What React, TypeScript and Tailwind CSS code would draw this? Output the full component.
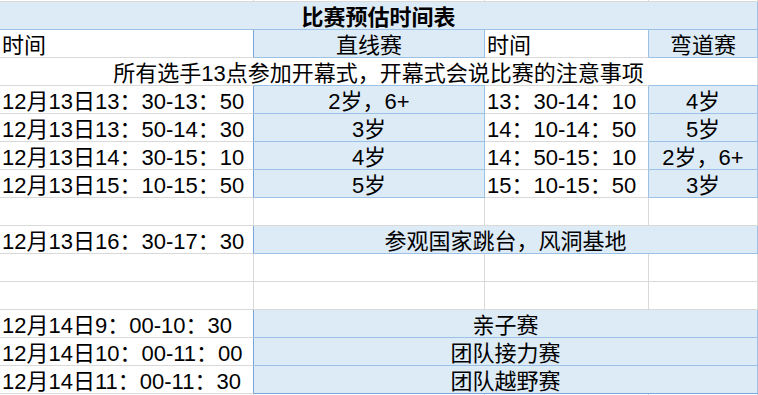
import React from "react";

const times1 = [
  ["12月13日13：30-13：50", "2岁，6+", "13：30-14：10", "4岁"],
  ["12月13日13：50-14：30", "3岁", "14：10-14：50", "5岁"],
  ["12月13日14：30-15：10", "4岁", "14：50-15：10", "2岁，6+"],
  ["12月13日15：10-15：50", "5岁", "15：10-15：50", "3岁"],
];

const day2 = [
  ["12月14日9：00-10：30", "亲子赛"],
  ["12月14日10：00-11：00", "团队接力赛"],
  ["12月14日11：00-11：30", "团队越野赛"],
];

function EmptyRow() {
  return (
    <div className="flex h-[28px]">
      <div className="w-[254px] border-b border-r border-b-[#d9d9d9] border-r-[#d9d9d9]" />
      <div className="w-[231px] border-b border-r border-b-[#d9d9d9] border-r-[#d9d9d9]" />
      <div className="w-[164px] border-b border-r border-b-[#d9d9d9] border-r-[#d9d9d9]" />
      <div className="w-[109px] border-b border-r border-b-[#d9d9d9] border-r-[#d9d9d9]" />
    </div>
  );
}

function MergedRow({ time, label, last }: { time: string; label: string; last?: boolean }) {
  return (
    <div className="flex h-[28px]">
      <div className="flex w-[254px] items-end whitespace-nowrap border-b border-r border-b-[#d9d9d9] border-r-[#7aa6da] pl-[2px]">
        {time}
      </div>
      <div
        className={
          last
            ? "flex w-[504px] items-end justify-center whitespace-nowrap border-b border-r border-b-[#7aa6da] border-r-[#9bc2e6] bg-[#ddebf7]"
            : "flex w-[504px] items-end justify-center whitespace-nowrap border-b border-r border-b-[#9bc2e6] border-r-[#9bc2e6] bg-[#ddebf7]"
        }
      >
        {label}
      </div>
    </div>
  );
}

export default function App() {
  return (
    <div className="h-[395px] w-[758px] overflow-hidden bg-white font-['Liberation_Sans','Noto_Sans_CJK_SC',sans-serif] text-[22px] leading-[22px] text-black">
      {/* sliver of row above */}
      <div className="flex h-[2px] border-b border-b-[#d9d9d9]">
        <div className="w-[254px] border-r border-r-[#d9d9d9]" />
        <div className="w-[231px] border-r border-r-[#d9d9d9]" />
        <div className="w-[164px] border-r border-r-[#d9d9d9]" />
        <div className="w-[109px] border-r border-r-[#d9d9d9]" />
      </div>

      {/* title */}
      <div className="flex h-[28px] items-end justify-center border-b border-r border-b-[#9bc2e6] border-r-[#9bc2e6] bg-[#ddebf7] font-bold">
        比赛预估时间表
      </div>

      {/* header */}
      <div className="flex h-[28px]">
        <div className="flex w-[254px] items-end border-b border-r border-b-[#d9d9d9] border-r-[#7aa6da] pl-[2px]">
          时间
        </div>
        <div className="flex w-[231px] items-end justify-center border-b border-r border-b-[#9bc2e6] border-r-[#9bc2e6] bg-[#ddebf7]">
          直线赛
        </div>
        <div className="flex w-[164px] items-end border-b border-r border-b-[#d9d9d9] border-r-[#9bc2e6] pl-[2px]">
          时间
        </div>
        <div className="flex w-[109px] items-end justify-center border-b border-r border-b-[#9bc2e6] border-r-[#9bc2e6] bg-[#ddebf7]">
          弯道赛
        </div>
      </div>

      {/* announcement */}
      <div className="flex h-[28px] flex-col">
        <div className="flex h-[27px] items-end justify-center whitespace-nowrap border-r border-r-[#d9d9d9]">
          所有选手13点参加开幕式，开幕式会说比赛的注意事项
        </div>
        <div className="flex h-px">
          <div className="w-[254px] bg-[#d9d9d9]" />
          <div className="w-[231px] bg-[#9bc2e6]" />
          <div className="w-[164px] bg-[#d9d9d9]" />
          <div className="w-[109px] bg-[#9bc2e6]" />
        </div>
      </div>

      {times1.map((r) => (
        <div key={r[0]} className="flex h-[28px]">
          <div className="flex w-[254px] items-end whitespace-nowrap border-b border-r border-b-[#d9d9d9] border-r-[#7aa6da] pl-[2px]">
            {r[0]}
          </div>
          <div className="flex w-[231px] items-end justify-center whitespace-nowrap border-b border-r border-b-[#9bc2e6] border-r-[#9bc2e6] bg-[#ddebf7]">
            {r[1]}
          </div>
          <div className="flex w-[164px] items-end whitespace-nowrap border-b border-r border-b-[#d9d9d9] border-r-[#9bc2e6] pl-[2px]">
            {r[2]}
          </div>
          <div className="flex w-[109px] items-end justify-center whitespace-nowrap border-b border-r border-b-[#9bc2e6] border-r-[#9bc2e6] bg-[#ddebf7]">
            {r[3]}
          </div>
        </div>
      ))}

      <EmptyRow />
      <MergedRow time="12月13日16：30-17：30" label="参观国家跳台，风洞基地" />
      <EmptyRow />
      <EmptyRow />
      {day2.map((r, i) => (
        <MergedRow key={r[0]} time={r[0]} label={r[1]} last={i === day2.length - 1} />
      ))}

      {/* sliver of row below */}
      <div className="flex h-px">
        <div className="w-[254px] border-r border-r-[#d9d9d9]" />
        <div className="w-[231px] border-r border-r-[#d9d9d9]" />
        <div className="w-[164px] border-r border-r-[#d9d9d9]" />
        <div className="w-[109px] border-r border-r-[#d9d9d9]" />
      </div>
    </div>
  );
}
